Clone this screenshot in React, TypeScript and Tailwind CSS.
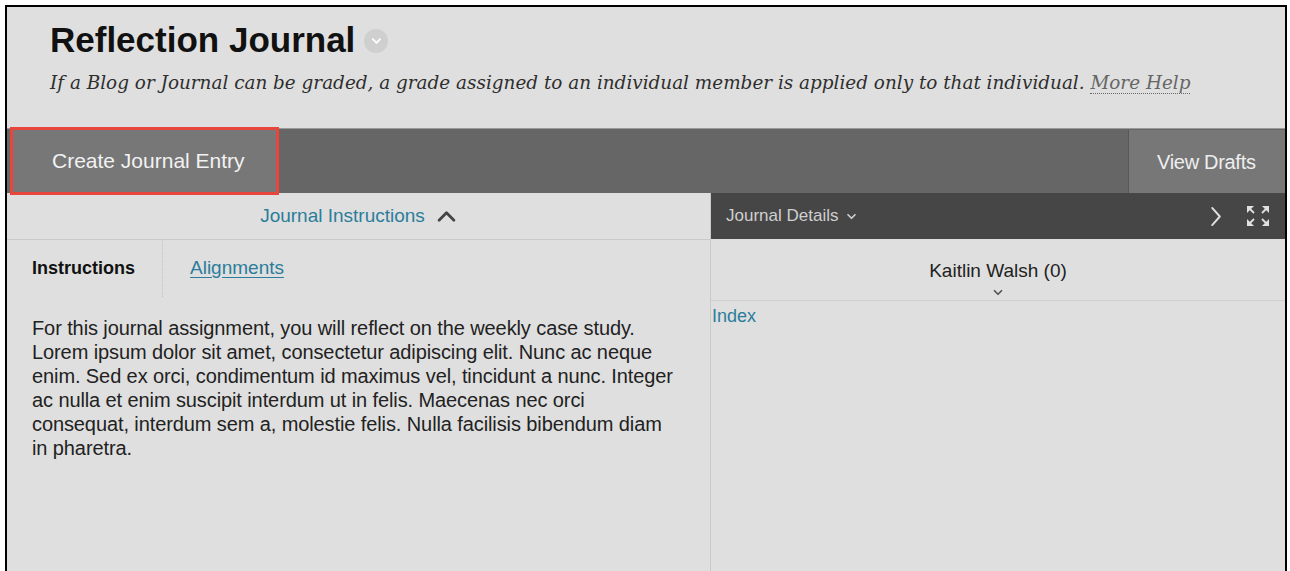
import React from "react";

const sans = { fontFamily: '"Liberation Sans", Arial, sans-serif' } as const;
const serif = { fontFamily: '"DejaVu Serif", Georgia, serif' } as const;

function ChevronDown({ className = "" }: { className?: string }) {
  return (
    <svg viewBox="0 0 12 8" className={className} fill="none" stroke="currentColor" strokeWidth="2" strokeLinecap="round" strokeLinejoin="round">
      <path d="M2 2l4 4 4-4" />
    </svg>
  );
}

function ChevronUp({ className = "" }: { className?: string }) {
  return (
    <svg viewBox="0 0 22 14" className={className} fill="none" stroke="currentColor" strokeWidth="3" strokeLinecap="round" strokeLinejoin="round">
      <path d="M3 11l8-8 8 8" />
    </svg>
  );
}

function ChevronRight({ className = "" }: { className?: string }) {
  return (
    <svg viewBox="0 0 12 22" className={className} fill="none" stroke="currentColor" strokeWidth="2" strokeLinecap="round" strokeLinejoin="round">
      <path d="M2 2l8 9-8 9" />
    </svg>
  );
}

function ExpandIcon({ className = "" }: { className?: string }) {
  return (
    <svg viewBox="0 0 24 22" className={className} fill="currentColor" stroke="currentColor" strokeWidth="1.8">
      {/* top-left */}
      <path d="M1 1h7L1 8z" stroke="none" />
      <path d="M3 3l5 5" fill="none" />
      {/* top-right */}
      <path d="M23 1h-7l7 7z" stroke="none" />
      <path d="M21 3l-5 5" fill="none" />
      {/* bottom-left */}
      <path d="M1 21h7l-7-7z" stroke="none" />
      <path d="M3 19l5-5" fill="none" />
      {/* bottom-right */}
      <path d="M23 21h-7l7-7z" stroke="none" />
      <path d="M21 19l-5-5" fill="none" />
    </svg>
  );
}

const bodyLines = [
  "For this journal assignment, you will reflect on the weekly case study.",
  "Lorem ipsum dolor sit amet, consectetur adipiscing elit. Nunc ac neque",
  "enim. Sed ex orci, condimentum id maximus vel, tincidunt a nunc. Integer",
  "ac nulla et enim suscipit interdum ut in felis. Maecenas nec orci",
  "consequat, interdum sem a, molestie felis. Nulla facilisis bibendum diam",
  "in pharetra.",
];

export default function App() {
  return (
    <div className="w-[1290px] h-[571px] overflow-hidden bg-white pt-[5px] pl-[5px] pr-[3px]" style={sans}>
      <div className="h-[566px] border-2 border-b-0 border-black bg-[#dfdfdf] flex flex-col">
        {/* Page heading */}
        <div className="pt-[13px] pb-[32px] pl-[43px]">
          <div className="h-[40px] flex items-center">
            <h1 className="text-[35px] leading-[40px] font-bold text-[#111]">Reflection Journal</h1>
            <span className="ml-[9px] mt-[1px] w-[24px] h-[24px] rounded-full bg-[#cfcfcf] flex items-center justify-center text-white">
              <ChevronDown className="w-[11px] h-[8px]" />
            </span>
          </div>
          <p className="mt-[10px] h-[26px] text-[18.4px] leading-[26px] italic text-[#2e2e2e]" style={serif}>
            If a Blog or Journal can be graded, a grade assigned to an individual member is applied only to that individual.{" "}
            <span className="text-[#666] border-b border-dotted border-[#666]">More Help</span>
          </p>
        </div>

        {/* Action bar */}
        <div className="h-[65px] border-t border-[#9a9a9a] bg-[#666] flex items-stretch">
          <button className="ml-[3px] -mt-[2px] -mb-[2px] w-[269px] border-[3px] border-[#e8463d] bg-[#777] pl-[39px] text-left text-[21px] text-[#f2f2f2] flex items-center">
            Create Journal Entry
          </button>
          <button className="ml-auto mt-[1px] w-[157px] border-l border-[#585858] bg-[#777] pl-[28px] text-left text-[20px] text-[#eeeeee] flex items-center tracking-[-0.3px]">
            View Drafts
          </button>
        </div>

        {/* Panels */}
        <div className="flex-1 flex min-h-0">
          {/* Instructions panel */}
          <div className="w-[704px] border-r border-[#c9c9c9]">
            <div className="h-[47px] border-b border-[#c9c9c9] flex items-center justify-center gap-[11px]">
              <span className="text-[19px] text-[#2b7d9b]">Journal Instructions</span>
              <ChevronUp className="w-[21px] h-[13px] text-[#444]" />
            </div>
            <div className="flex h-[57px]">
              <div className="w-[156px] border-r border-dotted border-[#c4c4c4] pl-[25px] pt-[17px] text-[18px] leading-[22px] font-bold text-[#111]">
                Instructions
              </div>
              <div className="pl-[27px] pt-[17px] text-[19px] leading-[22px] text-[#2b7d9b] underline underline-offset-[3px]">
                Alignments
              </div>
            </div>
            <div className="pl-[25px] pt-[19px] text-[20px] leading-[24px] text-[#222] tracking-[-0.1px]">
              {bodyLines.map((l) => (
                <div key={l} className="whitespace-nowrap">
                  {l}
                </div>
              ))}
            </div>
          </div>

          {/* Details panel */}
          <div className="flex-1">
            <div className="h-[46px] bg-[#464646] flex items-center pl-[15px] pr-[15px]">
              <span className="text-[17px] text-[#cfcfcf]">Journal Details</span>
              <ChevronDown className="ml-[8px] w-[11px] h-[7px] text-[#cfcfcf]" />
              <ChevronRight className="ml-auto w-[12px] h-[21px] text-[#e0e0e0]" />
              <ExpandIcon className="ml-[24px] w-[24px] h-[22px] text-[#e0e0e0]" />
            </div>
            <div className="h-[62px] border-b border-[#cfcfcf] flex flex-col items-center pt-[21px]">
              <span className="text-[19px] leading-[22px] text-[#222]">Kaitlin Walsh (0)</span>
              <ChevronDown className="mt-[7px] w-[12px] h-[7px] text-[#555]" />
            </div>
            <div className="pl-[1px] pt-[4px] text-[18px] leading-[22px] text-[#2b7d9b]">Index</div>
          </div>
        </div>
      </div>
    </div>
  );
}
